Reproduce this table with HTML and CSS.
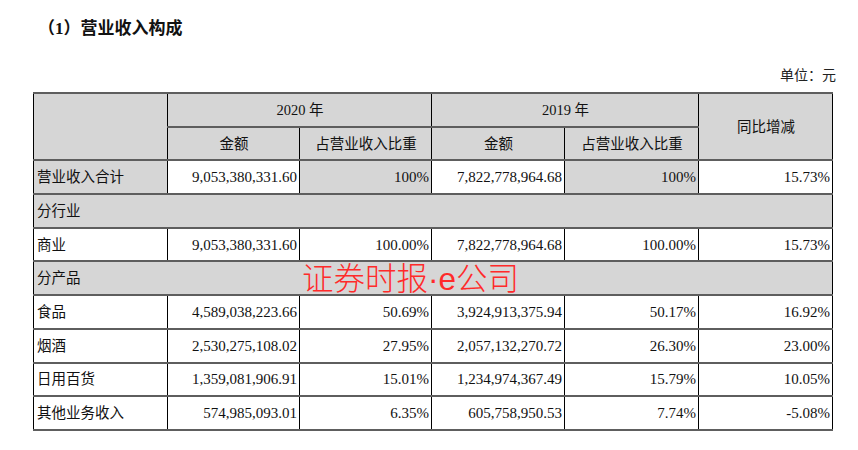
FILE: index.html
```html
<!DOCTYPE html>
<html lang="zh-CN">
<head>
<meta charset="utf-8">
<link rel="stylesheet" href="styles.css">
</head>
<body>
<div class="page">
  <h1 class="title">（1）营业收入构成</h1>
  <div class="unit">单位：元</div>
  <table class="rev">
    <colgroup>
      <col class="c1"><col class="c2"><col class="c3"><col class="c4"><col class="c5"><col class="c6">
    </colgroup>
    <tr class="g">
      <td rowspan="2"></td>
      <td colspan="2" class="ctr">2020 年</td>
      <td colspan="2" class="ctr">2019 年</td>
      <td rowspan="2" class="ctr">同比增减</td>
    </tr>
    <tr class="g">
      <td class="ctr">金额</td>
      <td class="ctr">占营业收入比重</td>
      <td class="ctr">金额</td>
      <td class="ctr">占营业收入比重</td>
    </tr>
    <tr>
      <td class="lbl g">营业收入合计</td>
      <td class="num">9,053,380,331.60</td>
      <td class="num g">100%</td>
      <td class="num">7,822,778,964.68</td>
      <td class="num g">100%</td>
      <td class="num">15.73%</td>
    </tr>
    <tr class="g">
      <td colspan="6" class="lbl">分行业</td>
    </tr>
    <tr>
      <td class="lbl">商业</td>
      <td class="num">9,053,380,331.60</td>
      <td class="num">100.00%</td>
      <td class="num">7,822,778,964.68</td>
      <td class="num">100.00%</td>
      <td class="num">15.73%</td>
    </tr>
    <tr class="g">
      <td colspan="6" class="lbl">分产品</td>
    </tr>
    <tr>
      <td class="lbl">食品</td>
      <td class="num">4,589,038,223.66</td>
      <td class="num">50.69%</td>
      <td class="num">3,924,913,375.94</td>
      <td class="num">50.17%</td>
      <td class="num">16.92%</td>
    </tr>
    <tr>
      <td class="lbl">烟酒</td>
      <td class="num">2,530,275,108.02</td>
      <td class="num">27.95%</td>
      <td class="num">2,057,132,270.72</td>
      <td class="num">26.30%</td>
      <td class="num">23.00%</td>
    </tr>
    <tr>
      <td class="lbl">日用百货</td>
      <td class="num">1,359,081,906.91</td>
      <td class="num">15.01%</td>
      <td class="num">1,234,974,367.49</td>
      <td class="num">15.79%</td>
      <td class="num">10.05%</td>
    </tr>
    <tr>
      <td class="lbl">其他业务收入</td>
      <td class="num">574,985,093.01</td>
      <td class="num">6.35%</td>
      <td class="num">605,758,950.53</td>
      <td class="num">7.74%</td>
      <td class="num">-5.08%</td>
    </tr>
  </table>
  <div class="mark">证券时报·e公司</div>
</div>
</body>
</html>
```
FILE: styles.css
```css
html, body {
  margin: 0;
  padding: 0;
  background: #ffffff;
}
.page {
  position: relative;
  width: 858px;
  height: 450px;
  font-family: "Liberation Serif", "Noto Sans CJK SC", serif;
  color: #111;
}
.title {
  margin: 0;
  padding: 17px 0 0 38px;
  font-family: "Liberation Serif", "Noto Sans CJK SC", serif;
  font-size: 17px;
  font-weight: bold;
  line-height: 24px;
  color: #111;
}
.unit {
  margin-top: 23px;
  padding-right: 22px;
  text-align: right;
  font-family: "Noto Sans CJK SC", sans-serif;
  font-size: 14px;
  line-height: 20px;
  color: #222;
}
.rev {
  margin: 8px 0 0 33px;
  width: 799px;
  border-collapse: collapse;
  table-layout: fixed;
}
.c1 { width: 134px; }
.c2 { width: 132px; }
.c3 { width: 132px; }
.c4 { width: 133px; }
.c5 { width: 134px; }
.c6 { width: 134px; }
.rev tr { height: 33.7px; }
.rev td {
  padding: 0 2px 0 3px;
  border-left: 1px solid #000;
  border-right: 1px solid #000;
  border-top: 2px solid #5e5e5e;
  border-bottom: 2px solid #5e5e5e;
  font-size: 15px;
  line-height: 20px;
  background: #ffffff;
  white-space: nowrap;
  overflow: hidden;
}
.rev tr.g td, .rev td.g {
  background: #d6d6d6;
}
.rev td.ctr {
  text-align: center;
  font-size: 14.5px;
}
.rev td.lbl {
  text-align: left;
  font-size: 14.5px;
}
.rev td.num {
  text-align: right;
}
.mark {
  position: absolute;
  left: 302px;
  top: 259px;
  font-family: "Liberation Sans", "Noto Sans CJK SC", sans-serif;
  font-size: 31.5px;
  font-weight: 300;
  line-height: 40px;
  color: #ff2a2a;
  white-space: nowrap;
}
```
